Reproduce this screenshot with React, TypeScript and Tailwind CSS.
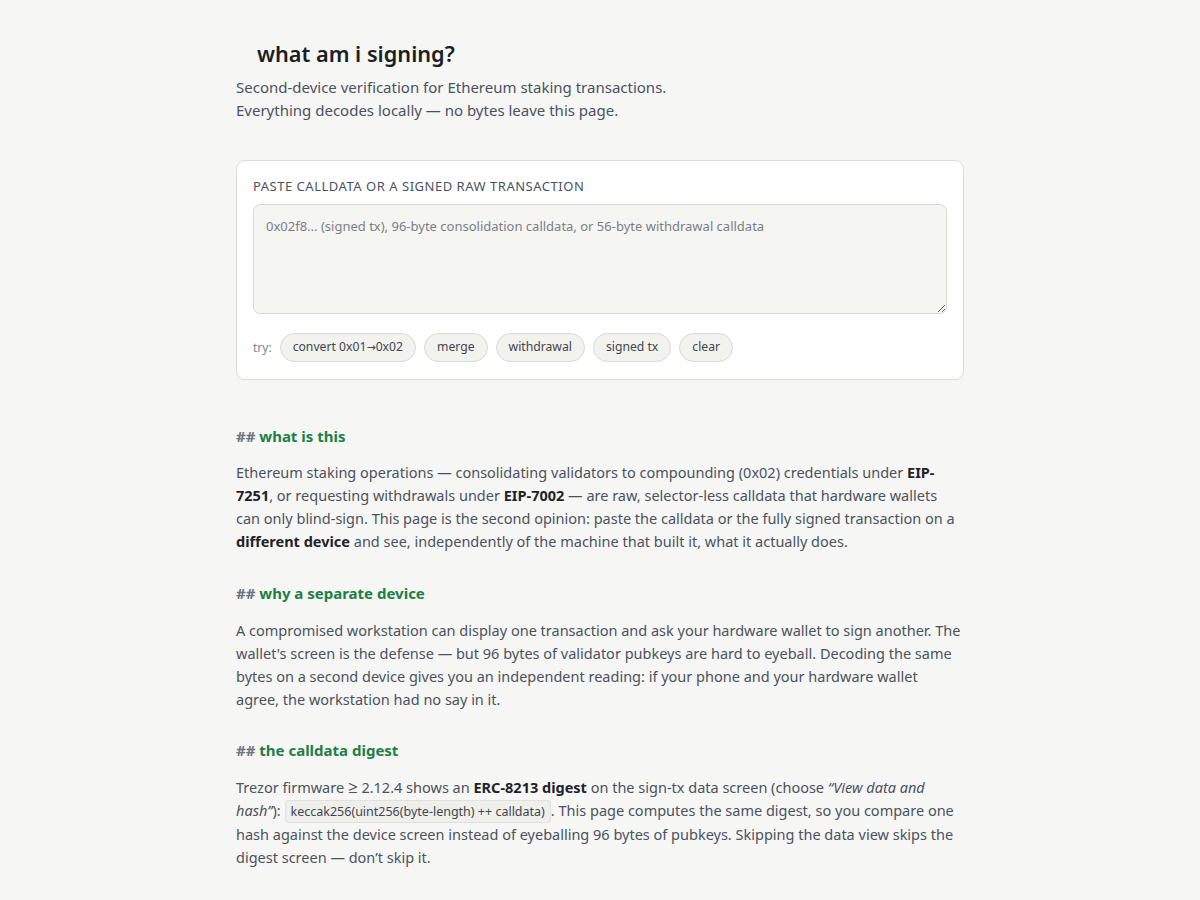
const font = { fontFamily: '"Noto Sans", "Open Sans", sans-serif' }

const samples = ['convert 0x01→0x02', 'merge', 'withdrawal', 'signed tx', 'clear']

function Heading({ children }: { children: React.ReactNode }) {
  return (
    <h2 className="text-[15px] font-bold leading-[22px] text-[#1d7f45]">
      <span className="text-[#6b7280]">##</span> {children}
    </h2>
  )
}

function Chip({ label }: { label: string }) {
  const parts = label.split('→')
  return (
    <button
      className="h-[29px] rounded-full border border-[#dadad4] bg-[#f2f2ee] px-3 text-[12.2px] text-[#3f4650]"
      style={font}
    >
      {parts.length > 1 ? (
        <>
          {parts[0]}
          <span className="text-[11px]" style={{ fontFamily: '"DejaVu Sans", sans-serif' }}>→</span>
          {parts[1]}
        </>
      ) : (
        label
      )}
    </button>
  )
}

export default function App() {
  return (
    <div className="min-h-screen bg-[#f6f6f4] text-[#4a5260]" style={font}>
      <main className="mx-auto w-[728px] pt-[38px] pb-10">
        <h1 className="pl-[21px] text-[21.7px] font-semibold leading-[32px] text-[#1b1f24]">what am i signing?</h1>
        <p className="mt-[6px] text-[15px] leading-[22.5px]">
          Second-device verification for Ethereum staking transactions.
          <br />
          Everything decodes locally — no bytes leave this page.
        </p>

        <section className="mt-[39px] rounded-[9px] border border-[#dcdcd6] bg-white px-4 pt-[16px] pb-[17px]">
          <label className="block text-[13px] uppercase leading-[18px] tracking-[0.04em] text-[#4a5260]">
            Paste calldata or a signed raw transaction
          </label>
          <textarea
            className="mt-[9px] block h-[110px] w-full resize-y rounded-[7px] border border-[#d8d8d2] bg-[#f5f5f2] px-3 py-[12px] text-[13px] leading-[18px] text-[#333] placeholder:text-[#7a7f87] focus:outline-none"
            style={font}
            placeholder="0x02f8... (signed tx), 96-byte consolidation calldata, or 56-byte withdrawal calldata"
          />
          <div className="mt-[19px] flex items-center gap-2">
            <span className="text-[12px] text-[#80858c]">try:</span>
            {samples.map((s) => (
              <Chip key={s} label={s} />
            ))}
          </div>
        </section>

        <section className="mt-[45px]">
          <Heading>what is this</Heading>
          <p className="mt-[14px] text-[14.5px] leading-[23px]">
            Ethereum staking operations — consolidating validators to compounding (0x02) credentials under{' '}
            <b className="font-bold text-[#1f2328]">EIP-7251</b>, or requesting withdrawals under{' '}
            <b className="font-bold text-[#1f2328]">EIP-7002</b> — are raw, selector-less calldata that hardware wallets
            can only blind-sign. This page is the second opinion: paste the calldata or the fully signed transaction on a{' '}
            <b className="font-bold text-[#1f2328]">different device</b> and see, independently of the machine that built
            it, what it actually does.
          </p>
        </section>

        <section className="mt-[29px]">
          <Heading>why a separate device</Heading>
          <p className="mt-[15px] text-[14.5px] leading-[23px]">
            A compromised workstation can display one transaction and ask your hardware wallet to sign another. The
            wallet's screen is the defense — but 96 bytes of validator pubkeys are hard to eyeball. Decoding the same
            bytes on a second device gives you an independent reading: if your phone and your hardware wallet agree, the
            workstation had no say in it.
          </p>
        </section>

        <section className="mt-[28px]">
          <Heading>the calldata digest</Heading>
          <p className="mt-[15px] text-[14.5px] leading-[23px]">
            Trezor firmware <span className="text-[17px] leading-none">≥</span> 2.12.4 shows an{' '}
            <b className="font-bold text-[#1f2328]">ERC-8213 digest</b> on the sign-tx data screen (choose{' '}
            <i>“View data and hash”</i>):{' '}
            <code
              className="rounded-[4px] border border-[#e2e2dc] bg-[#efefeb] px-[5px] py-[2px] text-[12.5px] text-[#3f4650]"
              style={font}
            >
              keccak256(uint256(byte-length) ++ calldata)
            </code>
            . This page computes the same digest, so you compare one hash against the device screen instead of
            eyeballing 96 bytes of pubkeys. Skipping the data view skips the digest screen — don’t skip it.
          </p>
        </section>
      </main>
    </div>
  )
}
